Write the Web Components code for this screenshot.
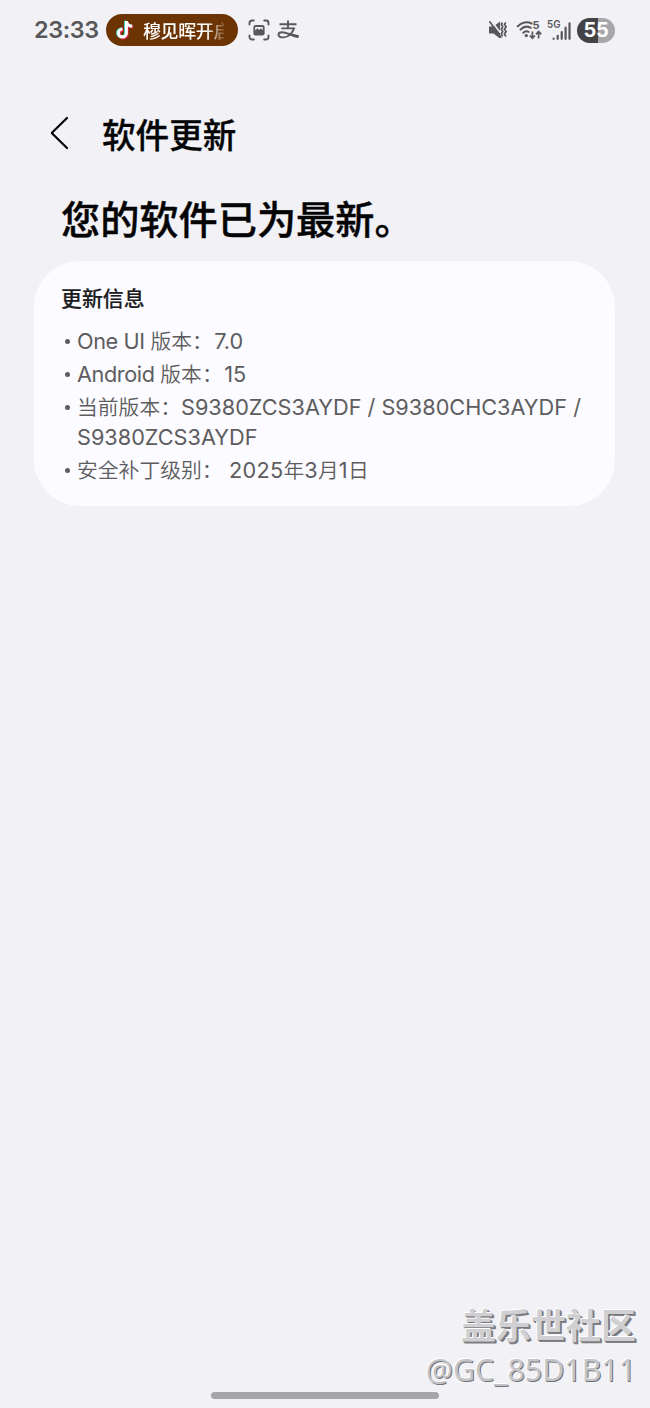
<!DOCTYPE html>
<html lang="zh-CN">
<head>
<meta charset="utf-8">
<title>软件更新</title>
<style>
html,body{margin:0;height:100%;background:#f1f1f6}
body{font-family:Inter,"Noto Sans CJK SC",sans-serif;overflow:hidden}
</style>
</head>
<body>
<update-screen></update-screen>
<script>
function define(name, html) {
  const t = document.createElement('template');
  t.innerHTML = html;
  customElements.define(name, class extends HTMLElement {
    constructor() {
      super();
      this.attachShadow({mode: 'open'}).appendChild(t.content.cloneNode(true));
    }
  });
}

define('live-chip', `<style>
:host{display:flex;align-items:center;box-sizing:border-box;width:132px;height:32px;border-radius:16px;background:#6c3403;padding-left:10px;color:#fff}
svg{flex:none;width:18px;height:20px;margin-right:9px}
span{width:81px;overflow:hidden;white-space:nowrap;font:500 18px/30px "Noto Sans CJK SC",sans-serif;letter-spacing:-.4px;-webkit-mask-image:linear-gradient(90deg,#000 78%,transparent 104%);mask-image:linear-gradient(90deg,#000 78%,transparent 104%)}
</style>
<svg viewBox="0 0 18 20" fill="none" stroke-width="3">
<path d="M10.400 1v12.200a4 4 0 1 1-4-4.100M10.400 1.200c.4 3 2.600 4.800 5.800 5" stroke="#28dfd6" transform="translate(-.8 -.2)"/>
<path d="M10.400 1v12.200a4 4 0 1 1-4-4.100M10.400 1.200c.4 3 2.600 4.800 5.800 5" stroke="#ed2450" transform="translate(.8 .8)"/>
<path d="M10.400 1v12.200a4 4 0 1 1-4-4.100M10.400 1.200c.4 3 2.600 4.800 5.800 5" stroke="#fff"/></svg>
<span><slot></slot></span>`);

define('capture-icon', `<style>:host,svg{display:block;width:22px;height:22px}</style>
<svg viewBox="0 0 22 22"><g fill="none" stroke="#58585b" stroke-width="1.900" stroke-linecap="round"><path d="M1.500 5.500V4a2.500 2.500 0 0 1 2.500-2.500h1.800M16.200 1.500H18A2.500 2.500 0 0 1 20.500 4v1.500M20.500 16.500V18a2.500 2.500 0 0 1-2.500 2.500h-1.800M5.800 20.500H4A2.500 2.500 0 0 1 1.500 18v-1.500"/></g>
<rect x="5.400" y="5.900" width="11.200" height="10.600" rx="2.200" fill="#58585b"/><path d="M7.200 11.600 9.400 9.300l1.800 1.700 1.600-1.700 2 1.900V8H7.200z" fill="#f1f1f6"/></svg>`);

define('pay-icon', `<style>:host,svg{display:block;width:23px;height:20px}</style>
<svg viewBox="0 0 23 20" fill="none" stroke="#58585b" stroke-width="1.900"><path d="M2.500 4.200h17M11 .5v7.700M4.300 8.400h12.700c-1.300 4-5 9-10.400 9-3 0-5.100-.9-5.100-2.700 0-1.700 1.700-2.500 3.600-2.500 5 0 8.300 3.200 16.600 4.300"/><path d="m12.500 13 9.400 2.300-.8 2.800c-4-.3-6.400-2-9.400-3.500z" fill="#58585b" stroke="none"/></svg>`);

define('mute-icon', `<style>:host,svg{display:block;width:20px;height:20px}</style>
<svg viewBox="0 0 20 20"><path d="M1 6.600h4.500L12 1.600v16.800L5.500 13.400H1z" fill="#58585b"/><path d="m3.200 1 12.300 15.500" stroke="#f1f1f6" stroke-width="1.600"/><path d="m1.800 1.800 11 15.400" stroke="#58585b" stroke-width="1.700" stroke-linecap="round"/><path d="m14.300 2.500-1 2 1.400 2.300-1.400 2.400 1.400 2.300-1.400 2.400 1.200 2.600M17.800 2.500l-1.400 2 1.700 2.300-1.700 2.400 1.700 2.300-1.700 2.400 1.500 2.600" fill="none" stroke="#58585b" stroke-width="1.700"/></svg>`);

define('wifi-icon', `<style>:host,svg{display:block;width:27px;height:20px;overflow:visible}text{font:700 11px Inter,sans-serif}</style>
<svg viewBox="0 0 27 20"><g fill="none" stroke="#58585b" stroke-width="2" stroke-linecap="round"><path d="M1.700 6.300C5.600 1.900 11.300 1.300 15.600 3.500M4.500 9.600c2.700-3 6.800-3.600 10.300-1.800M7.300 12.700c1.500-1.500 3.400-1.800 5.300-.9"/></g><circle cx="10.300" cy="15.600" r="1.700" fill="#58585b"/><text x="16.500" y="9.300" fill="#58585b">5</text><g fill="none" stroke="#58585b" stroke-width="1.700"><path d="M16.400 11.500v6.500M13.800 15.500l2.600 2.700 2.600-2.700M22.600 18.500v-6.500M20 14.300l2.600-2.700 2.600 2.700"/></g></svg>`);

define('signal-icon', `<style>:host,svg{display:block;width:24px;height:21px;overflow:visible}text{font:600 10.500px Inter,sans-serif}</style>
<svg viewBox="0 0 24 21"><text x="0" y="8.200" fill="#58585b" textLength="13.500" lengthAdjust="spacingAndGlyphs">5G</text><g stroke="#58585b" stroke-width="2.200" stroke-linecap="round"><path d="M6.600 18.700v.1M10.700 15.800v3M14.700 12v6.800M18.600 7.700v11.100M22.500 3.300v15.500"/></g></svg>`);

define('battery-pill', `<style>:host{display:grid;place-items:center;width:38px;height:25px;border-radius:13px;background:linear-gradient(90deg,#444446 55%,#a6a6ab 55%);color:#fff;font:700 20px/25px Inter,sans-serif;letter-spacing:-.3px}</style><slot></slot>`);

define('status-bar', `<style>
:host{display:flex;align-items:center;box-sizing:border-box;height:60px;padding:0 35px 0 34px}
time{width:72px;color:#58585b;font:600 23.400px/30px Inter,sans-serif;letter-spacing:-.4px;white-space:nowrap}
capture-icon{margin-left:10px}pay-icon{margin-left:7px}
mute-icon{margin-left:auto}wifi-icon{margin-left:8px}signal-icon{margin-left:4px}battery-pill{margin-left:6px}
</style><time>23:33</time><live-chip>穆见晖开启</live-chip><capture-icon></capture-icon><pay-icon></pay-icon><mute-icon></mute-icon><wifi-icon></wifi-icon><signal-icon></signal-icon><battery-pill>55</battery-pill>`);

define('page-header', `<style>
:host{display:flex;align-items:center;height:60px;margin-top:43px;padding-left:50px}
svg{width:20px;height:34px;margin-right:32px}
h1{margin:0;font:500 33.600px/50px "Noto Sans CJK SC",sans-serif;color:#050506;-webkit-text-stroke:.3px #050506;padding-top:2px}
</style><svg viewBox="0 0 20 34"><path d="M17 2 2.200 16.500a.7.7 0 0 0 0 1L17 32" fill="none" stroke="#050506" stroke-width="2.200" stroke-linecap="round"/></svg><h1><slot></slot></h1>`);

define('update-status', `<style>
:host{display:block;margin-top:24px;padding-left:61px;height:74px}
h2{margin:0;font:500 39.200px/60px "Noto Sans CJK SC",sans-serif;color:#050506;-webkit-text-stroke:.4px #050506}
</style><h2><slot></slot></h2>`);

define('info-card', `<style>
:host{display:block;box-sizing:border-box;margin:0 35px 0 34px;height:245px;padding:21px 20px 0 27px;border-radius:46px;background:#fcfbff}
h3{margin:0 0 15px;font:500 20.900px/30px "Noto Sans CJK SC",sans-serif;color:#1c1c1e;-webkit-text-stroke:.2px #1c1c1e}
div{display:flex;flex-direction:column;gap:3px}
</style><h3>更新信息</h3><div><slot></slot></div>`);

define('info-item', `<style>
:host{display:flex;height:30px;color:#5d5d60;font:350 20.800px/30px "Noto Sans CJK SC",sans-serif;white-space:pre-wrap}
:host([tall]){height:60px}
i{flex:none;width:5px;height:5px;border-radius:50%;background:#5d5d60;margin:12px 7px 0 4px}
div{margin-top:-2px}
::slotted(span){font-family:Inter,sans-serif;font-weight:400;font-size:21.700px;line-height:20px}
::slotted(.word){letter-spacing:-.4px}
::slotted(.after){margin-left:1.500px}
::slotted(.date){letter-spacing:.3px}
</style><i></i><div><slot></slot></div>`);

define('brand-mark', `<style>
:host{position:absolute;right:14px;bottom:16px;display:flex;flex-direction:column;align-items:flex-end;color:#d0d0d2;text-shadow:-1px -1px #fff,1px 1px #78787c,2px 2px #838387;white-space:nowrap}
b{font:700 35px/46px "Noto Sans CJK SC",sans-serif;margin-bottom:1px}
span{font:400 30.300px/44px "Noto Sans",sans-serif;color:#c4c4c7;text-shadow:-1px -1px #fff,1px 1px #737377}
</style><b>盖乐世社区</b><span>@GC_85D1B11</span>`);

define('home-handle', `<style>:host{position:absolute;left:211px;bottom:9px;width:228px;height:7px;border-radius:4px;background:#a5a5aa}</style>`);

define('update-screen', `<style>
:host{display:block;position:relative;width:650px;height:1408px;background:#f1f1f6;overflow:hidden}
</style>
<status-bar></status-bar><page-header>软件更新</page-header><update-status>您的软件已为最新。</update-status>
<info-card><info-item><span class="word">One UI </span>版本：<span class="after">7.0</span></info-item><info-item><span class="word">Android </span>版本：<span class="after">15</span></info-item><info-item tall>当前版本：<span>S9380ZCS3AYDF / S9380CHC3AYDF /<br>S9380ZCS3AYDF</span></info-item><info-item>安全补丁级别：<span class="date"> 2025</span>年<span class="date">3</span>月<span class="date">1</span>日</info-item></info-card>
<brand-mark></brand-mark><home-handle></home-handle>`);
</script>
</body>
</html>
